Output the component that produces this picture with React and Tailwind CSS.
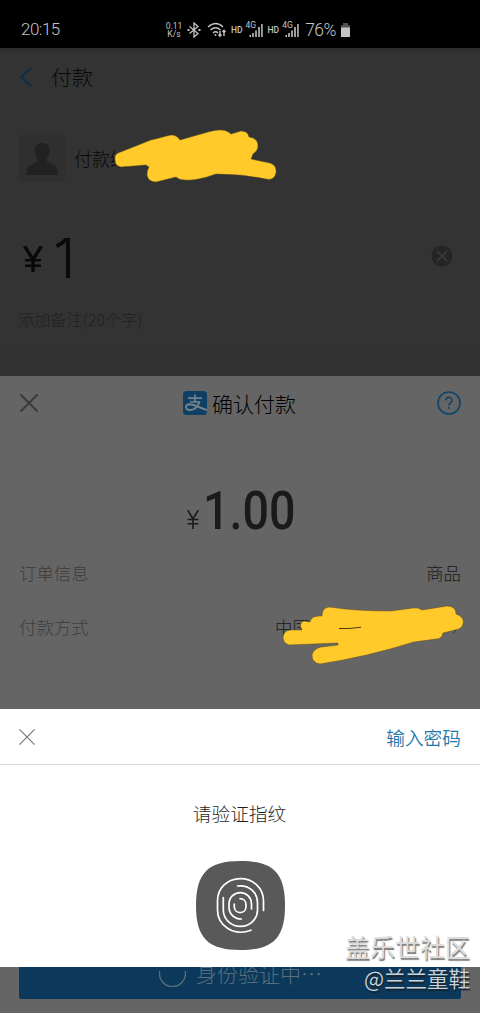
import React from "react";

const Scribble = ({ d, className, viewBox, children }) => (
  <svg className={className} viewBox={viewBox} fill="#ffca2a">
    <path d={d} stroke="#5c4c1d" strokeWidth="0.5" />
    {children}
  </svg>
);

const Cross = ({ className }) => (
  <svg className={className} viewBox="0 0 18 18" fill="none" stroke="currentColor">
    <path d="M.5 .5 17.5 17.5M17.5 .5 .5 17.5" />
  </svg>
);

const Signal = () => (
  <span className="relative block h-4 w-[18px]">
    <span className="absolute -top-px -left-[2px] text-[8.5px] leading-[8px]">4G</span>
    <svg className="absolute inset-0 size-full" viewBox="0 0 18 16" fill="currentColor">
      <path d="M1.500 13H3v2H1.500zM4.200 11h1.600v4H4.200zM7.200 8.500h1.600V15H7.200zM10.200 5h1.600v10h-1.600zM13.200 2h1.500v13h-1.500z" />
    </svg>
  </span>
);

function StatusBar() {
  return (
    <header className="flex h-12 shrink-0 items-center bg-black pt-3 pr-[130px] pl-[21px] text-[#c4c4c4]">
      <span className="text-[17px] font-light tracking-[-0.5px] [font-family:Roboto,sans-serif]">20:15</span>
      <div className="ml-auto flex items-center [font-family:Roboto,sans-serif]">
        <div className="w-[18px] text-center text-[8.5px] leading-[8px]">0.11<br />K/s</div>
        <svg className="ml-[4px] h-4 w-[14px]" viewBox="0 0 14 16" fill="none" stroke="currentColor" strokeWidth="1.3">
          <path d="M2.5 4.500 11 11.500 7 15V1l4 3.500-8.500 7" /><path d="M.5 8h2M11.500 8h2" strokeWidth="2" />
        </svg>
        <svg className="ml-[6px] h-4 w-[20px]" viewBox="0 0 20 16" fill="none" stroke="currentColor" strokeWidth="1.4">
          <path d="M1 5q8-7 15 0M3.500 8q5-4.500 10 0M6 11q2.600-2.400 5 0M13 9v5M11.500 12.500 13 14.200l1.500-1.700M17 14V8.500M15.500 10 17 8.300l1.500 1.700" />
          <circle cx="8.500" cy="13" r="1" fill="currentColor" stroke="none" />
        </svg>
        <span className="ml-[4px] text-[8.500px] font-medium">HD</span>
        <span className="ml-[5px]"><Signal /></span>
        <span className="ml-[2px] text-[8.500px] font-medium">HD</span>
        <span className="ml-[5px]"><Signal /></span>
        <span className="ml-[3px] text-[17.500px] font-light tracking-[-0.5px]">76%</span>
        <svg className="ml-[5px] h-[14px] w-[9px]" viewBox="0 0 9 14"><path d="M2 0h5v2h2v3H0V2h2z" fill="#505050" /><path d="M0 4.500h9V14H0z" fill="#c4c4c4" /></svg>
      </div>
    </header>
  );
}

function Transfer() {
  return (
    <section className="relative flex h-[328px] shrink-0 flex-col bg-[#333] text-[#090909]">
      <div className="flex h-[58px] items-center bg-linear-to-b from-[#2b2b2b] to-[#333] to-10% pl-[19px]">
        <svg className="h-5 w-[13px]" viewBox="0 0 13 20" fill="none" stroke="#112f46" strokeWidth="2.2"><path d="M12.3 .8 2 10l10.3 9.2" /></svg>
        <h1 className="mb-[2px] ml-[19px] text-[21px] leading-none font-light">付款</h1>
      </div>
      <div className="mt-[29px] flex h-[47px] items-center pl-[19px]">
        <div className="flex h-[47px] w-[46px] items-center justify-center rounded-[3px] bg-[#2f2f2f]">
          <svg className="h-8 w-8" viewBox="0 0 32 32" fill="#212121"><path d="M16 0c4.600 0 7.500 3 7.500 8 0 3-1 5-2.500 7v3.500c1 2.500 10 2.500 10.500 9V32H.5v-4.500c.500-6.500 9.500-6.500 10.500-9V15c-1.500-2-2.500-4-2.500-7 0-5 2.900-8 7.500-8z" /></svg>
        </div>
        <span className="mb-[2px] ml-[9px] text-[18px] leading-none font-light">付款给</span>
      </div>
      <div className="mt-[42px] flex h-[64px] items-center pr-[27px] pl-[23px]">
        <svg className="mt-[6px] h-[26px] w-5" viewBox="0 0 20 26" fill="none" stroke="currentColor"><path d="M1.500 0 10 13.500 18.500 0M10 13v13" strokeWidth="3.400" /><path d="M2 14.200h16M2 19.700h16" strokeWidth="2.400" /></svg>
        <svg className="mt-[3px] ml-[13px] h-10 w-[14px]" viewBox="0 0 14 40" fill="none" stroke="currentColor" strokeWidth="3.800"><path d="M.5 8Q6 6 9.500 2H12v38" /></svg>
        <svg className="ml-auto size-[22px]" viewBox="0 0 22 22"><circle cx="11" cy="11" r="10.500" fill="#252525" /><path d="m6 6 10 10m0-10L6 16" stroke="#383838" strokeWidth="1.800" /></svg>
      </div>
      <div className="mt-[23px] pl-[18px] text-[16.200px] leading-4 font-light text-[#212121]">添加备注(20个字)</div>
      <div className="mt-auto h-[29px] border-t border-[#313131] bg-[#323232]" />
      <Scribble
        className="absolute top-[72px] left-[100px] h-[70px] w-[190px]"
        viewBox="0 0 190 70"
        d="M18 33 L51 20 C56 19 66 16 71 15 Q77 15 80 20 Q94 16 108 12 C119 9 126 9 131 14 L141 11 Q148 11 149 17 Q158 18 158 26 Q158 31 153 34 Q152 37 151 39 L170 43 Q177 45 176 53 Q174 61 166 59 Q142 54 116 54 Q97 61 85 60 Q79 60 76 57 L56 62 Q48 62 47 55 Q47 50 49 47 L46 45 L21 47 Q15 46 15 40 Q14 35 18 33Z"
      />
    </section>
  );
}

function Confirm() {
  return (
    <section className="relative flex h-[333px] shrink-0 flex-col bg-[#656565] px-[19px]">
      <div className="grid h-[54px] grid-cols-[1fr_auto_1fr] items-center">
        <Cross className="ml-[1px] size-[18px] stroke-[1.8] text-[#353535]" />
        <div className="flex items-center gap-[5px] pr-px">
          <svg className="size-6" viewBox="0 0 24 24" fill="none" stroke="#77838a">
            <rect width="24" height="24" rx="3.500" fill="#0f4064" stroke="none" />
            <path d="M5 7.200h14M12 3.500V11M7 11h10" strokeWidth="1.700" />
            <path d="M16.500 11C15 15 11.500 19 7 19c-5 0-5.500-5.500-.5-5.700 4 0 8 2.700 17.500 5.700" strokeWidth="1.900" />
          </svg>
          <h2 className="text-[21px] leading-6 font-light text-black">确认付款</h2>
        </div>
        <svg className="ml-auto size-6" viewBox="0 0 24 24" fill="none" stroke="#11466c" strokeWidth="1.700">
          <circle cx="12" cy="12" r="11" /><path d="M8.800 9.500C9 5.500 15 5.500 15 9.200c0 2.400-3 2.500-3 5.300M12 16v2" />
        </svg>
      </div>
      <div className="h-[29px] border-b border-[#636363] bg-[#646464]" />
      <div className="mt-[33px] flex h-[38px] items-end justify-center gap-[4px] pl-[2px] text-[#1a1a1a]">
        <svg className="mb-px h-[19px] w-3" viewBox="0 0 12 19" fill="none" stroke="currentColor" strokeWidth="1.600"><path d="M.7 0 6 9l5.300-9M6 9v10M.5 9.500h11M.5 13.800h11" /></svg>
        <span className="flex h-[38px] w-[92px] items-center">
          <span className="block origin-left scale-x-[0.88] text-[53px] leading-[38px] font-medium whitespace-nowrap [font-family:Roboto,sans-serif]">1.00</span>
        </span>
      </div>
      <div className="mt-[33px] flex h-[20px] items-center justify-between text-[17.400px] leading-5 font-light">
        <span className="text-[#3d3d3d]">订单信息</span><span className="text-[#191919]">商品</span>
      </div>
      <div className="mt-[34px] flex h-[20px] items-center justify-between text-[17.400px] leading-5 font-light">
        <span className="text-[#3d3d3d]">付款方式</span>
        <span className="w-[186px] text-[#191919]">中国</span>
      </div>
      <Scribble
        className="absolute top-[174px] left-[260px] h-[125px] w-[220px]"
        viewBox="0 0 220 125"
        d="M70 57 Q94 61 131 61 L153 58 Q158 57 162 60 L187 56 Q196 56 196 64 Q205 67 203 74 Q202 79 195 80 L183 83 Q182 89 176 89 L154 92 Q106 107 60 114 Q52 113 52 105 Q53 99 61 97 L78 95 L78 93 L29 95 Q23 93 23 87 Q24 80 31 80 L42 80 Q38 73 44 71 L50 72 Q51 65 62 66 Q62 57 70 57Z"
      ><path d="M79 78.500 Q90 79 101 77.200" fill="none" stroke="#4a3c12" strokeWidth="1" /><path d="m193 83 3-3" stroke="#333" /></Scribble>
    </section>
  );
}

function FingerprintPanel() {
  return (
    <section className="relative z-10 flex h-[258px] shrink-0 flex-col bg-white">
      <div className="flex h-[56px] items-center justify-between border-b border-[#d9d9d9] px-[19px]">
        <Cross className="size-4 stroke-[1.3] text-[#777]" />
        <button className="text-[18.700px] leading-6 font-[350] text-[#1f79ac]">输入密码</button>
      </div>
      <p className="mt-[36px] pr-px text-center text-[18.700px] leading-6 font-light text-[#1f1f1f]">请验证指纹</p>
      <svg className="mx-auto mt-[36px] size-[89px]" viewBox="0 0 89 89" fill="none" stroke="white" strokeWidth="1.700" strokeLinecap="round">
        <path d="M44.500 0C77 0 89 12 89 44.500S77 89 44.500 89 0 77 0 44.500 12 0 44.500 0Z" fill="#595959" stroke="none" />
        <path d="M55 69.200C37 76 21.500 64 21.500 49V40C21.500 27 31.500 17.600 44.300 17.600S67.500 27 67.500 40v9.500" />
        <path d="M41.500 25C53 23.500 61.500 31 61.500 42v7c0 9-7.500 16.300-17 16.300S27.300 58 27.300 49V36.500" />
        <path d="M45.300 58C38 58 33 53 33 46v-3c0-6.500 5-11.400 11.300-11.400S55.500 36.500 55.500 43v5" />
        <path d="M44 37.600c3.500 0 6 2.400 6 6v2.200c0 3.500-2.400 5.800-5.800 5.800s-5.900-2.300-5.900-5.800V43" />
      </svg>
    </section>
  );
}

export default function App() {
  return (
    <main className="relative flex h-[1013px] w-[480px] flex-col overflow-hidden bg-[#656565] [font-family:'Noto_Sans_CJK_SC',sans-serif]">
      <StatusBar />
      <Transfer />
      <Confirm />
      <FingerprintPanel />
      <footer className="h-[46px] px-[19px]">
        <div className="flex h-8 items-start rounded-b-[2px] bg-[#0c395b] pl-[140px] text-[#596f7d]">
          <svg className="-mt-[7px] h-[27px] w-[27px] shrink-0" viewBox="0 0 27 27" fill="none" stroke="currentColor" strokeWidth="1.300"><path d="M.7 11a13 13 0 1 0 25.500 0" /></svg>
          <span className="-mt-[6px] ml-[10px] text-[21px] leading-6 font-light whitespace-nowrap">身份验证中⋯</span>
        </div>
      </footer>
      <div className="absolute right-[10px] bottom-[19px] z-20 text-right whitespace-nowrap">
        <div className="text-[25px] leading-[32px] text-[#dcdcdc] [text-shadow:1px_2px_1px_#777]">盖乐世社区</div>
        <div className="text-[21.500px] leading-[32px] font-[350] text-[#c9d3da] [text-shadow:1px_2px_1px_#17212a]">@兰兰童鞋</div>
      </div>
    </main>
  );
}
